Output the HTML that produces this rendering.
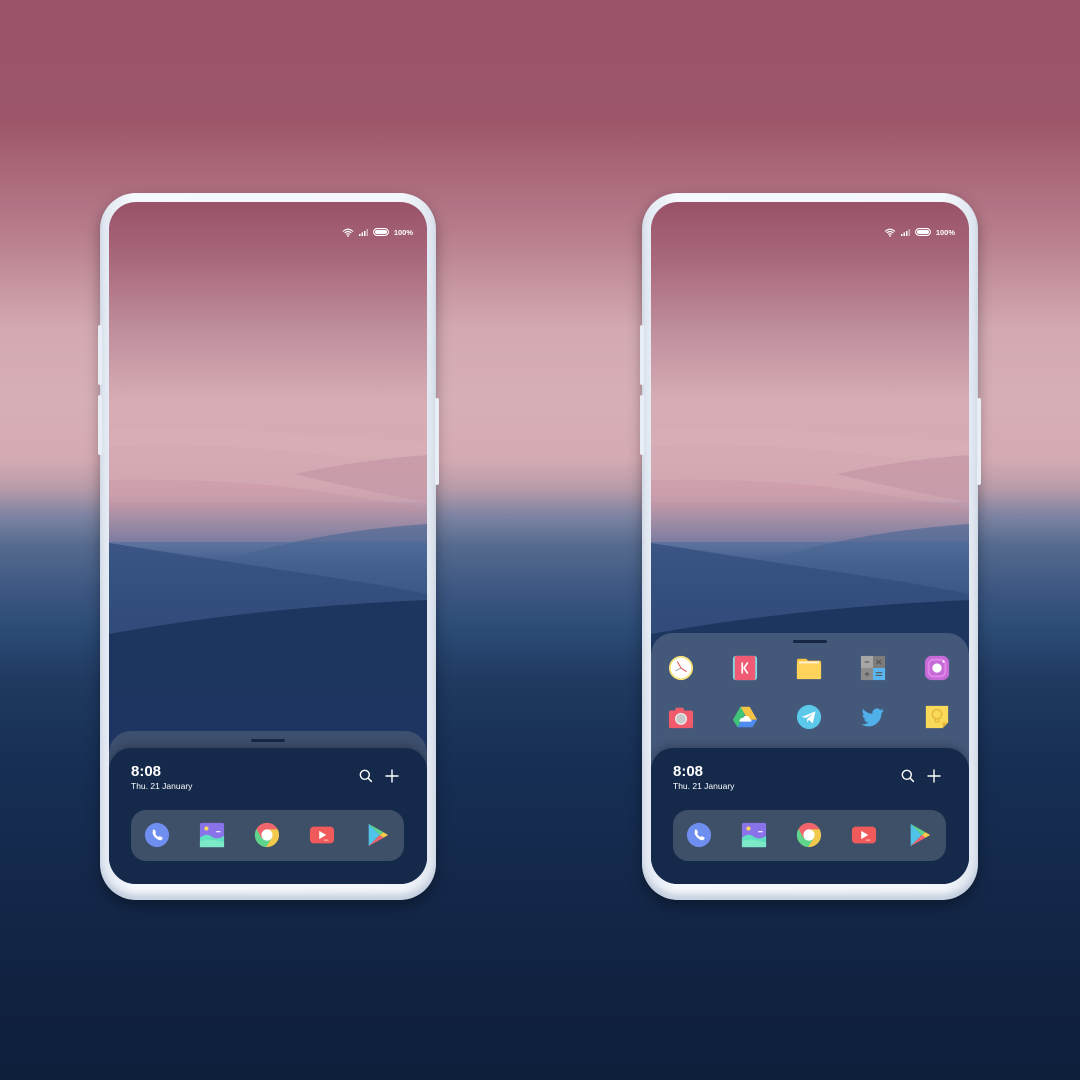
<!DOCTYPE html>
<html><head><meta charset="utf-8">
<style>
*{margin:0;padding:0;box-sizing:border-box}
html,body{width:1080px;height:1080px;overflow:hidden}
body{position:relative;font-family:"Liberation Sans",sans-serif;
background:linear-gradient(180deg,#9b5468 0px,#9d5669 120px,#b77c8b 230px,#d3a9b2 330px,#d7afb7 400px,#d4aab3 460px,#b59aa8 490px,#7f84a2 515px,#566b8f 545px,#3c5782 590px,#2b4b75 630px,#1f3961 680px,#172f55 760px,#10213f 1000px,#0e1f3c 1080px)}
.phone{position:absolute;top:193px;width:336px;height:707px;border-radius:36px;background:linear-gradient(90deg,#dfe6f0,#f5f8fc 10%,#f3f6fb 90%,#dde4ee);box-shadow:0 6px 14px rgba(0,0,0,.35),inset 0 -6px 6px rgba(170,185,205,.6)}
.btn{position:absolute;width:4px;background:#e9eef6;border-radius:2px}
.screen{position:absolute;left:9px;top:9px;width:318px;height:682px;border-radius:27px;overflow:hidden;
background:linear-gradient(180deg,#995268 0px,#a9697d 60px,#c08f9c 130px,#d6adb5 200px,#d6abb4 250px,#cfa2ad 285px,#b497aa 305px,#8a8aa8 322px,#5e75a0 340px,#3f5c8a 365px,#2a4572 400px,#1d3761 440px,#182f58 682px)}
.screen svg.d{position:absolute;left:0;top:0}
.status{position:absolute;right:14px;top:25px;height:10px;color:#fff;font-size:7.5px;font-weight:bold;display:flex;align-items:center;gap:5px}
.panel{position:absolute;left:0;width:318px;border-radius:22px 22px 0 0}
.handle{position:absolute;left:50%;margin-left:-17px;width:34px;height:3px;border-radius:2px;background:#152744}
.time{position:absolute;left:22px;color:#fff;font-weight:bold;font-size:15px}
.date{position:absolute;left:22px;color:#fff;font-size:8.5px}
.dock{position:absolute;left:22px;width:273px;height:51px;border-radius:15px;background:#3e4f68}
.ic{position:absolute;width:26px;height:26px;margin:-13px 0 0 -13px}
</style></head><body>

<div id="p1" class="phone" style="left:100px">
 <div class="btn" style="left:-2px;top:132px;height:60px"></div>
 <div class="btn" style="left:-2px;top:202px;height:60px"></div>
 <div class="btn" style="right:-3px;top:205px;height:87px"></div>
 <div class="screen">
  <svg class="d" width="318" height="682" viewBox="0 0 318 682">
   <defs>
    <linearGradient id="g1" x1="0" y1="0" x2="0" y2="1"><stop offset="0" stop-color="#d5a7b1" stop-opacity=".5"/><stop offset="1" stop-color="#d5a7b1" stop-opacity="0"/></linearGradient>
    <linearGradient id="g2" x1="0" y1="0" x2="0" y2="1"><stop offset="0" stop-color="#4a6794" stop-opacity=".9"/><stop offset="1" stop-color="#2a4572" stop-opacity=".9"/></linearGradient>
   </defs>
   <path d="M0 228 Q80 222 160 230 Q250 236 318 240 L318 300 L0 300Z" fill="#dbb2ba" opacity=".35"/>
   <path d="M0 244 Q100 240 190 250 Q260 258 318 262 L318 320 L0 320Z" fill="url(#g1)"/>
   <path d="M185 272 Q250 258 318 253 L318 300 Q260 290 185 272Z" fill="#c597a6" opacity=".7"/>
   <path d="M0 278 Q120 276 200 288 Q270 298 318 306 L318 340 L0 340Z" fill="#c48f9f" opacity=".3"/>
   <path d="M0 341 Q60 350 104 362 Q200 330 318 322 L318 682 L0 682Z" fill="url(#g2)" opacity=".7"/>
   <path d="M0 341 Q120 360 220 375 Q280 384 318 392 L318 682 L0 682Z" fill="#2f4a78" opacity=".6"/>
   <path d="M0 432 Q150 405 318 398 L318 682 L0 682Z" fill="#1c355f" opacity=".95"/>
  </svg>
  <div class="status">
   <svg width="12" height="9" viewBox="0 0 12 9"><path d="M1 3.5Q6 -1 11 3.5M2.6 5Q6 2 9.4 5M4.2 6.5Q6 5 7.8 6.5" stroke="#fff" stroke-width="1.1" fill="none"/><circle cx="6" cy="8" r=".9" fill="#fff"/></svg>
   <svg width="9" height="7" viewBox="0 0 9 7"><rect x="0" y="5" width="1.5" height="2" fill="#fff"/><rect x="2.5" y="3.5" width="1.5" height="3.5" fill="#fff"/><rect x="5" y="2" width="1.5" height="5" fill="#fff"/><rect x="7.5" y="0" width="1.5" height="7" fill="#fff" opacity=".5"/></svg>
   <svg width="16" height="8" viewBox="0 0 16 8"><rect x=".6" y=".6" width="14.8" height="6.8" rx="3.4" stroke="#fff" stroke-width="1.1" fill="none"/><rect x="2" y="2" width="12" height="4" rx="2" fill="#fff"/></svg>
   <span>100%</span>
  </div>
  <div class="bottom"></div>
 </div>
</div>

<div id="p2" class="phone" style="left:642px"></div>

<script>
var icoDock = [
 '<svg viewBox="0 0 28 28"><circle cx="14" cy="14" r="13" fill="#6f8ff0"/><path d="M9.5 8.5c1-.8 2-.5 2.4.4l.8 1.8c.3.7 0 1.3-.6 1.8 .7 1.6 1.9 2.9 3.5 3.6 .5-.6 1.2-.9 1.9-.6l1.7.8c.9.4 1.1 1.5.4 2.3-1.5 1.6-3.5 1.3-6-.6-2.8-2.1-5-5.4-4.1-7.4z" fill="#fff"/></svg>',
 '<svg viewBox="0 0 28 28"><rect x="1" y="1" width="26" height="26" rx="2" fill="#8a72e8"/><path d="M1 17Q8 11 14 16Q20 20 27 15L27 27L1 27Z" fill="#5fe0c0"/><path d="M1 21Q10 17 27 22L27 27L1 27Z" fill="#7ceac7"/><circle cx="8" cy="7" r="2.2" fill="#ffd75a"/><path d="M18 11q1-2 3-1q2-1 2.5 1z" fill="#fff"/></svg>',
 '<svg viewBox="0 0 28 28"><circle cx="14" cy="14" r="13" fill="#f2c94c"/><path d="M14 1A13 13 0 0 0 2.7 7.5L8.3 17.5 14 8H25.3A13 13 0 0 0 14 1Z" fill="#f1646c"/><path d="M2.7 7.5A13 13 0 0 0 13 27L18.8 17.5 8.3 17.5Z" fill="#5fd48c"/><circle cx="14" cy="14" r="6" fill="#fff"/></svg>',
 '<svg viewBox="0 0 28 28"><rect x="1" y="5" width="26" height="18" rx="4" fill="#f05a5a"/><path d="M11 9.5L18.5 14 11 18.5Z" fill="#fff"/><rect x="16" y="19" width="5" height="1" fill="#fcc"/></svg>',
 '<svg viewBox="0 0 28 28"><path d="M5 2L17 14 5 26Z" fill="#4fc3e8"/><path d="M5 2L21 11 17 14Z" fill="#5fd48c"/><path d="M5 26L17 14 21 17Z" fill="#f1646c"/><path d="M17 14L21 11 26 14 21 17Z" fill="#f7c948"/></svg>'
];
var icoGrid = [
 '<svg viewBox="0 0 28 28"><circle cx="14" cy="14" r="13" fill="#f6e27a"/><circle cx="14" cy="14" r="11" fill="#fff"/><path d="M14 14L10 7M14 14L20 18" stroke="#e05a5a" stroke-width="1.2"/><path d="M14 14L8 17" stroke="#999" stroke-width="1"/></svg>',
 '<svg viewBox="0 0 28 28"><rect x="1" y="1" width="26" height="26" rx="3" fill="#82d8e0"/><rect x="3" y="1" width="22" height="26" rx="2" fill="#f05a72"/><path d="M11 8V20M17 8L13 14 17 20" stroke="#fff" stroke-width="1.8" fill="none"/></svg>',
 '<svg viewBox="0 0 28 28"><path d="M1 6Q1 4 3 4H11L13 6H25Q27 6 27 8V25H1Z" fill="#f6c445"/><rect x="1" y="9" width="26" height="17" rx="1" fill="#ffd35a"/><rect x="3" y="7" width="22" height="2" fill="#fff" opacity=".8"/></svg>',
 '<svg viewBox="0 0 28 28"><rect x="1" y="1" width="13" height="13" fill="#a6a6a6"/><rect x="14" y="1" width="13" height="13" fill="#7d7d7d"/><rect x="1" y="14" width="13" height="13" fill="#8c8c8c"/><rect x="14" y="14" width="13" height="13" fill="#5ab6f0"/><path d="M5 7.5H10M5 20.5H10M7.5 18V23M17.5 5L23 10M23 5L17.5 10M17 19H24M17 22H24" stroke="#555" stroke-width="1.2"/></svg>',
 '<svg viewBox="0 0 28 28"><rect x="1" y="1" width="26" height="26" rx="7" fill="#c66ad8"/><rect x="5" y="5" width="18" height="18" rx="5" fill="none" stroke="#e088e8" stroke-width="2"/><circle cx="14" cy="14" r="5" fill="#fff"/><circle cx="21" cy="7" r="1.2" fill="#fff"/></svg>',
 '<svg viewBox="0 0 28 28"><rect x="1" y="7" width="26" height="19" rx="2" fill="#f05a6a"/><rect x="8" y="4" width="9" height="4" rx="1" fill="#f05a6a"/><circle cx="14" cy="16" r="6.5" fill="#e8e8e8"/><circle cx="14" cy="16" r="5" fill="#c8c8c8"/></svg>',
 '<svg viewBox="0 0 28 28"><path d="M9 3H19L27 17H17Z" fill="#f6c445"/><path d="M9 3L1 17 6 25 14 11Z" fill="#3fc47a"/><path d="M6 25H22L27 17H11Z" fill="#4f8cf0"/><path d="M8 19q0-4 4-4q1-3 4-2q3 0 3 3q2 0 2 3z" fill="#fff"/></svg>',
 '<svg viewBox="0 0 28 28"><circle cx="14" cy="14" r="13" fill="#5cc8ea"/><path d="M6 14L21 8 18 21 14 17 12 20 12 16 19 10 11 15Z" fill="#fff"/></svg>',
 '<svg viewBox="0 0 28 28"><path d="M26 7q-1.5.7-3 .8 1.7-1 2.2-2.7-1.6 1-3.3 1.2A5 5 0 0 0 13.4 10.6 14 14 0 0 1 3.3 5.4a5 5 0 0 0 1.5 6.6q-1.1 0-2.2-.6a5 5 0 0 0 3.9 4.9q-1 .3-2.2.1a5 5 0 0 0 4.6 3.4A10 10 0 0 1 1.7 21.9 14 14 0 0 0 23.2 9.8q1.6-1.2 2.8-2.8z" fill="#4fb0ea"/></svg>',
 '<svg viewBox="0 0 28 28"><path d="M2 2H26V20L20 26H2Z" fill="#f8d95a"/><path d="M20 26V20H26Z" fill="#e6b83a"/><circle cx="14" cy="11" r="5" fill="none" stroke="#e8b83a" stroke-width="1.5"/><path d="M12 16V19H16V16" stroke="#e8b83a" stroke-width="1.5" fill="none"/></svg>'
];
function icons(list, xs, y){var h='';for(var i=0;i<xs.length;i++){h+='<div class="ic" style="left:'+xs[i]+'px;top:'+y+'px">'+list[i]+'</div>';}return h;}
var dockX=[48,103,158,213,268];
function bottom(drawer){
 var h='';
 if(drawer){
  h+='<div class="panel" style="top:431px;height:251px;background:#44587a"><div class="handle" style="top:7px"></div></div>';
  h+=icons(icoGrid.slice(0,5),[30,94,158,222,286],466);
  h+=icons(icoGrid.slice(5),[30,94,158,222,286],515);
 } else {
  h+='<div class="panel" style="top:529px;height:153px;background:#3d4f6e"><div class="handle" style="top:8px"></div></div>';
 }
 h+='<div class="panel" style="top:546px;height:136px;background:#152a4b;box-shadow:0 -3px 8px rgba(0,0,0,.2)"></div>';
 h+='<div class="time" style="top:561px">8:08</div><div class="date" style="top:579px">Thu. 21 January</div>';
 h+='<svg style="position:absolute;left:250px;top:567px" width="14" height="14" viewBox="0 0 14 14"><circle cx="5.8" cy="5.8" r="4.5" stroke="#fff" stroke-width="1.4" fill="none"/><path d="M9 9L12.8 12.8" stroke="#fff" stroke-width="1.5"/></svg>';
 h+='<svg style="position:absolute;left:276px;top:567px" width="14" height="14" viewBox="0 0 14 14"><path d="M7 0.5V13.5M0.5 7H13.5" stroke="#fff" stroke-width="1.4"/></svg>';
 h+='<div class="dock" style="top:608px"></div>';
 h+=icons(icoDock,dockX,633);
 return h;
}
var p1=document.getElementById('p1');
var p2=document.getElementById('p2');
p2.innerHTML=p1.innerHTML;
p1.querySelector('.bottom').innerHTML=bottom(false);
p2.querySelector('.bottom').innerHTML=bottom(true);
</script>
</body></html>
